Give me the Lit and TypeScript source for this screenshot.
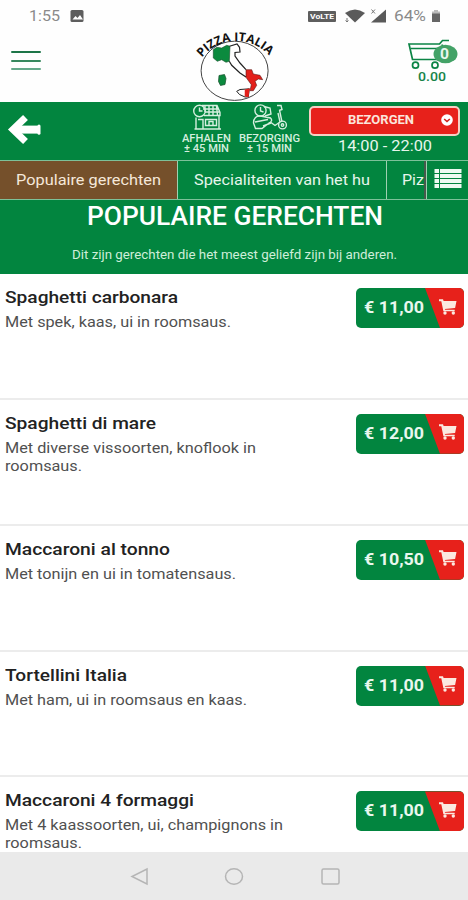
import { LitElement, html, css, svg } from "lit";
import { customElement, property } from "lit/decorators.js";
import { styleMap } from "lit/directives/style-map.js";

/* A single line of text, stretched horizontally to a given width. */
@customElement("fit-text")
class FitText extends LitElement {
  @property({ type: Number }) w = 100;
  @property() text = "";
  static styles = css`
    :host { display: block; white-space: nowrap; }
    .box { display: block; }
    .line { display: inline-block; transform-origin: 0 50%; }
  `;
  updated() {
    const line = this.renderRoot.querySelector(".line") as HTMLElement;
    const natural = line.getBoundingClientRect().width;
    if (natural > 0 && !line.style.transform) line.style.transform = `scaleX(${this.w / natural})`;
  }
  render() {
    return html`<span class="box" style=${styleMap({ width: `${this.w}px` })}><span class="line">${this.text}</span></span>`;
  }
}

interface Dish { name: string; nameW: number; lines: [string, number][]; price: string; }

const dishes: Dish[] = [
  { name: "Spaghetti carbonara", nameW: 173, lines: [["Met spek, kaas, ui in roomsaus.", 226]], price: "€ 11,00" },
  { name: "Spaghetti di mare", nameW: 151, lines: [["Met diverse vissoorten, knoflook in", 251], ["roomsaus.", 77]], price: "€ 12,00" },
  { name: "Maccaroni al tonno", nameW: 165, lines: [["Met tonijn en ui in tomatensaus.", 231]], price: "€ 10,50" },
  { name: "Tortellini Italia", nameW: 122, lines: [["Met ham, ui in roomsaus en kaas.", 242]], price: "€ 11,00" },
  { name: "Maccaroni 4 formaggi", nameW: 189, lines: [["Met 4 kaassoorten, ui, champignons in", 278], ["roomsaus.", 77]], price: "€ 11,00" },
];

const statusLeft = svg`
  <rect x="70.500" y="10" width="13" height="12" rx="1.500" fill="#5e5e5e"/>
  <path d="M72.500 19.500l3-3.500 2 2 2.500-3 3 4.500z" fill="#fff"/>`;

const logo = html`<svg class="logo" viewBox="190 28 90 74">
  <defs><path id="arc" d="M202 57.500A44 44 0 0 1 269.500 56"/></defs>
  <ellipse cx="234.600" cy="70.800" rx="33.500" ry="29.600" fill="#fff" stroke="#444" stroke-width="1"/>
  <path d="M229.500 46.300L237 44l2.500 3.300.5 4.700-5 .5v3.500l5 7 6 6.700M229.300 61.300l2.400 4L240 73l6 4" fill="none" stroke="#222" stroke-width="1.200"/>
  <path d="M213.300 49.700l3.400-2.400 5 .7 5-2.700 3.300 1-.7 15-3.300 1-4.300-2.600-4.400 1.600-4-3.300z" fill="#0b8a3e" stroke="#174d2a" stroke-width=".6"/>
  <path d="M246 69.700h5.700l1.600 4.300 6.700 1.300 2.700 4.400-4.400-.7-3.300 2.300 1.700 4-3.400 5.400H250l1.300-6-5.300-7.400z" fill="#e3201b" stroke="#5d1715" stroke-width=".6"/>
  <path d="M236.700 91.300l3.300-1.800 9.300-.7-1 8-3.300.2-5.500-2.500z" fill="#fff" stroke="#222" stroke-width="1"/>
  <path d="M244.800 89.500l5-1.200-1.300 9-3.800-.8z" fill="#e3201b"/>
  <path d="M219 75.500l5.500-1 1.500 4-1 6-4.500 1-2-4z" fill="#0b8a3e" stroke="#164d2a" stroke-width=".7"/>
  <text class="logo-text"><textPath href="#arc" textLength="76" lengthAdjust="spacingAndGlyphs">PIZZA ITALIA</textPath></text>
</svg>`;

const cart = html`<svg class="cart" viewBox="404 36 56 34">
  <g fill="none" stroke="#0b8445" stroke-width="1.700">
    <path d="M449 40.500h-6.500l-3 3.500h-30.500l3.500 15.500h27l3-15"/>
    <path d="M411 48.500h29" stroke-width="1.500"/>
    <circle cx="415.500" cy="65.200" r="3"/><circle cx="435" cy="65.200" r="3"/>
  </g>
  <ellipse cx="445.500" cy="54" rx="12" ry="9.300" fill="#43a267"/>
</svg>`;

const shopIcon = html`<svg class="mode-icon" viewBox="0 0 30 26" fill="none" stroke="#d5efdf" stroke-width="1.400">
  <path d="M10 1.500h15l3 7v3H12M13 2v6M17 2v9M21 2v9M24.500 2l1 9M11 5h15M13 8h15"/>
  <circle cx="7.500" cy="7" r="5.800"/><path d="M7.500 3.500V7h3"/>
  <path d="M4 13.500V25h23V12M6 15.500h5V25M13.500 15.500h11v6h-11zM17 21v-3.500h4V21M2.500 25H29"/>
</svg>`;

const scooterIcon = html`<svg class="mode-icon wide" viewBox="0 0 36 26" fill="none" stroke="#d5efdf" stroke-width="1.400">
  <circle cx="8.500" cy="6.500" r="5.600"/><path d="M8.500 3v4l3 1"/>
  <path d="M12 2.500l6 1.500 1 6-6 2M25 1.500h4l1 4-3 1M27.500 6l2.500 12M26 9l2 9-5 3.500-4-3M1.500 19c0-5 3-7.500 7-7l10 2c2 2 1 4-1.500 5L10 24.500H3.500zM3 18l13-2.500M11 22l8-3"/>
  <circle cx="30.500" cy="21" r="3.900"/><circle cx="30.500" cy="21" r="1.200"/>
</svg>`;

@customElement("app-root")
class AppRoot extends LitElement {
  static styles = css`
    :host { display: block; width: 468px; height: 900px; overflow: hidden; background: #fff; font-family: Roboto, sans-serif; color: #222; }
    * { box-sizing: border-box; }
    svg { display: block; flex: none; }
    .page { display: flex; flex-direction: column; height: 900px; }
    .top { display: grid; grid-template-columns: 190px 90px 1fr; height: 102px; flex: none; background: #fefefe; }
    .left, .right { display: flex; flex-direction: column; }
    .status { display: flex; height: 32px; align-items: center; }
    .clock { margin-left: 29px; font-size: 15px; line-height: 32px; color: #8a8a8a; }
    .picture { margin-left: 10px; width: 14px; height: 12px; }
    .burger { display: grid; gap: 6px; margin: 19px 0 0 11px; width: 30px; }
    .bar { height: 2px; border-radius: 1px; background: #1d7548; }
    .bar.mid { background: #37885e; margin-top: 1px; }
    .bar.low { background: #65a98a; }
    .logo { width: 90px; height: 74px; margin-top: 28px; overflow: visible; }
    .logo-text { font: 700 12px "Open Sans", sans-serif; fill: #111; }
    .lte { margin-left: 28px; width: 28px; height: 11px; padding-left: 2px; background: #5e5e5e; border-radius: 1px; font: 700 7.5px/11px Roboto, sans-serif; color: #fff; }
    .signals { width: 44px; height: 16px; margin-left: 8px; }
    .percent { margin-left: 6px; font-size: 15px; color: #8a8a8a; line-height: 32px; }
    .battery { width: 10px; height: 14px; margin-left: 5px; }
    .basket { display: grid; margin: 4px 0 0 124px; width: 56px; }
    .cart, .count { grid-area: 1 / 1; }
    .cart { width: 56px; height: 34px; }
    .count { margin: 9px 0 0 36px; font: 700 14px/18px Roboto, sans-serif; color: #e9f6ee; }
    .total { margin-left: 14px; font-size: 13px; font-weight: 500; line-height: 14px; color: #17834a; }
    .modes { display: flex; height: 58px; flex: none; background: #02853f; color: #e6f6ec; }
    .back { width: 34px; height: 34px; margin: 11px 0 0 7px; }
    .mode { display: flex; flex-direction: column; align-items: center; padding-top: 2px; font-size: 10px; font-weight: 500; line-height: 10px; color: #d5efdf; }
    .mode.pickup { margin-left: 140px; width: 51px; }
    .mode.delivery { margin-left: 7px; width: 61px; }
    .mode-icon { width: 30px; height: 26px; margin-bottom: 4px; }
    .mode-icon.wide { width: 36px; }
    .when { margin: 4px 0 0 9px; width: 151px; display: flex; flex-direction: column; align-items: center; }
    .select { width: 151px; height: 30px; border: 2px solid #f6cfc4; border-radius: 5px; background: #e7211b; display: flex; align-items: center; padding: 0 0 2px 37px; gap: 27px; font-size: 12px; font-weight: 700; color: #fbe5dc; }
    .chevron { width: 12px; height: 12px; }
    .hours { font-size: 14px; line-height: 16px; margin-top: 2px; }
    .tabs { display: flex; height: 40px; flex: none; background: #02853f; border-top: 1px solid #7dc199; border-bottom: 1px solid #7dc199; font-size: 15px; line-height: 38px; color: #e6f6ec; }
    .tab { flex: none; padding-left: 16px; border-right: 1px solid #9fd0b1; overflow: hidden; }
    .tab.active { width: 178px; background: #75502b; color: #f5e8da; }
    .tab.second { width: 209px; }
    .tab.cut { width: 39px; border-right: 2px solid #46584c; padding-left: 15px; }
    .list { width: 28px; height: 22px; margin: 7px 0 0 7px; }
    .more { border-left: 1px solid #9fd0b1; }
    .hero { height: 74px; flex: none; background: #02853f; color: #fff; }
    .hero-title { margin-left: 87px; font-size: 25px; font-weight: 500; line-height: 34px; }
    .hero-sub { margin: 12px 0 0 72px; font-size: 12px; line-height: 18px; color: #cfeeda; }
    .menu { flex: 1; min-height: 0; overflow: hidden; }
    .dish { display: flex; justify-content: space-between; height: 125.850px; padding: 14px 4px 0 5px; border-bottom: 2px solid #ececec; }
    .name { font-size: 17px; font-weight: 500; line-height: 19px; color: #222; }
    .desc { padding-top: 6px; font-size: 14px; line-height: 18px; color: #505050; }
    .buy { display: flex; align-items: center; width: 108px; height: 40px; border-radius: 5px; padding-left: 8px; gap: 15px; background: #02853f; overflow: hidden; position: relative; flex: none; }
    .buy::after { content: ""; position: absolute; inset: 0; background: #e7211b; clip-path: polygon(69px 0, 108px 0, 108px 40px, 84px 40px); }
    .price { font-size: 16px; font-weight: 700; line-height: 40px; color: #e9f7ee; }
    .trolley { width: 18px; height: 16px; margin-top: -3px; position: relative; z-index: 1; }
    .nav { display: flex; height: 48px; flex: none; background: #eaeaea; padding-left: 129px; align-items: center; }
    .nav svg { width: 214px; height: 20px; }
  `;

  row(d: Dish) {
    return html`<div class="dish">
      <div>
        <fit-text class="name" .w=${d.nameW} .text=${d.name}></fit-text>
        <div class="desc">${d.lines.map(([t, w]) => html`<fit-text .w=${w} .text=${t}></fit-text>`)}</div>
      </div>
      <div class="buy">
        <fit-text class="price" .w=${60} .text=${d.price}></fit-text>
        <svg class="trolley" viewBox="0 0 18 16">
          <path d="M0 .3h4l.6 1.700H17.500l-1.400 7L5.800 10l.3.800h9.600v1.500H4.400L2.300 2.200H0z" fill="#fbe9e0"/>
          <circle cx="6" cy="14" r="1.700" fill="#fbe9e0"/><circle cx="14.300" cy="14" r="1.700" fill="#fbe9e0"/>
        </svg>
      </div>
    </div>`;
  }

  render() {
    return html`<div class="page">
      <div class="top">
        <div class="left">
          <div class="status">
            <fit-text class="clock" .w=${31} .text=${"1:55"}></fit-text>
            <svg class="picture" viewBox="70 10 14 12">${statusLeft}</svg>
          </div>
          <div class="burger"><div class="bar"></div><div class="bar mid"></div><div class="bar low"></div></div>
        </div>
        ${logo}
        <div class="right">
          <div class="status">
            <div class="lte"><fit-text .w=${24} .text=${"VoLTE"}></fit-text></div>
            <svg class="signals" viewBox="344 8 44 16" fill="#5a5a5a">
              <path d="M345 13q10-7 20 0l-10 9.500z"/><path d="M386 9.500v13h-15z"/>
              <path d="M371.500 9.500l3.500 4m0-4l-3.500 4M347 18v4m-1.500-1.500L347 22l1.500-1.500" stroke="#777" fill="none"/>
            </svg>
            <fit-text class="percent" .w=${32} .text=${"64%"}></fit-text>
            <svg class="battery" viewBox="0 0 10 14"><path d="M3 1h4v1.500h2V5H1V2.500h2z" fill="#bbb"/><path d="M1 4.500h8V13H1z" fill="#666"/></svg>
          </div>
          <div class="basket">${cart}<fit-text class="count" .w=${9} .text=${"0"}></fit-text>
            <fit-text class="total" .w=${28} .text=${"0.00"}></fit-text></div>
        </div>
      </div>
      <div class="modes">
        <svg class="back" viewBox="7 113 34 34"><path d="M25.500 117.500L13 129.600l12.500 12" fill="none" stroke="#fff" stroke-width="7"/><path d="M14 129.600h25.500" fill="none" stroke="#fff" stroke-width="8"/><path d="M39 126v7.200" stroke="#fff" stroke-width="3" stroke-linecap="round"/></svg>
        <div class="mode pickup">${shopIcon}<fit-text .w=${49} .text=${"AFHALEN"}></fit-text><fit-text .w=${45} .text=${"± 45 MIN"}></fit-text></div>
        <div class="mode delivery">${scooterIcon}<fit-text .w=${61} .text=${"BEZORGING"}></fit-text><fit-text .w=${45} .text=${"± 15 MIN"}></fit-text></div>
        <div class="when">
          <div class="select"><fit-text .w=${66} .text=${"BEZORGEN"}></fit-text>
            <svg class="chevron" viewBox="0 0 12 12"><circle cx="6" cy="6" r="5.800" fill="#fff"/><path d="M3.200 5l2.800 2.500L8.800 5" fill="none" stroke="#d0201c" stroke-width="1.600"/></svg></div>
          <fit-text class="hours" .w=${94} .text=${"14:00 - 22:00"}></fit-text>
        </div>
      </div>
      <div class="tabs">
        <div class="tab active"><fit-text .w=${145} .text=${"Populaire gerechten"}></fit-text></div>
        <div class="tab second"><fit-text .w=${176} .text=${"Specialiteiten van het hu"}></fit-text></div>
        <div class="tab cut"><fit-text .w=${22} .text=${"Piz"}></fit-text></div>
        <div class="more"><svg class="list" viewBox="0 0 28 22" fill="#eefaf2">
          ${[1, 6, 11, 16].map((y) => svg`<path d=${`M.5 ${y}h4.500v4h-4.500zM6 ${y}h21.500v4h-21.500z`}/>`)}
        </svg></div>
      </div>
      <div class="hero">
        <fit-text class="hero-title" .w=${296} .text=${"POPULAIRE GERECHTEN"}></fit-text>
        <fit-text class="hero-sub" .w=${325} .text=${"Dit zijn gerechten die het meest geliefd zijn bij anderen."}></fit-text>
      </div>
      <div class="menu">${dishes.map((d) => this.row(d))}</div>
      <div class="nav"><svg viewBox="129 866 214 20" fill="none" stroke="#b5b5b5" stroke-width="1.500">
        <path d="M147 869v15l-15-7.500z"/><ellipse cx="234" cy="876.500" rx="8.500" ry="7.800"/><rect x="322" y="869" width="17" height="15" rx="1.500"/>
      </svg></div>
    </div>`;
  }
}
